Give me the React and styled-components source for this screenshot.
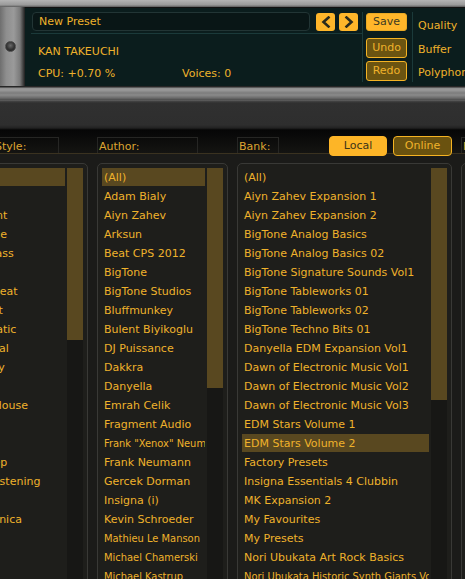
import styled, { createGlobalStyle } from "styled-components";

const GlobalStyle = createGlobalStyle`
  html, body {
    margin: 0;
    padding: 0;
    background: #1b1b19;
  }
  body {
    font-family: "DejaVu Sans", Verdana, sans-serif;
    font-size: 11px;
  }
`;

const GOLD = "#efb22b";

const Page = styled.div`
  width: 465px;
  height: 579px;
  overflow: hidden;
  display: flex;
  flex-direction: column;
  background: #1b1b19;
`;

/* ---------- rack / display ---------- */

const RackTop = styled.div`
  flex-shrink: 0;
  height: 7px;
  background: linear-gradient(#b4b4b4, #9a9a9a 70%, #5a5a5a);
`;

const RackRow = styled.div`
  flex-shrink: 0;
  display: flex;
  height: 79px;
`;

const MetalSide = styled.div`
  flex-shrink: 0;
  width: 25px;
  display: flex;
  align-items: center;
  padding-left: 5px;
  box-sizing: border-box;
  background: linear-gradient(
    to right,
    #6e6e6e,
    #8e8e8e 25%,
    #9a9a9a 55%,
    #7a7a7a 80%,
    #3a3a3a 94%,
    #1e1e1e
  );
`;

const Screw = styled.div`
  width: 11px;
  height: 11px;
  border-radius: 50%;
  box-sizing: border-box;
  border: 1px solid #4a4a4a;
  background: radial-gradient(circle at 50% 40%, #6a6a6a, #333 55%, #1c1c1c);
`;

const Display = styled.div`
  flex: 1;
  min-width: 0;
  display: flex;
  box-sizing: border-box;
  padding: 4px 0 4px 6px;
  background: #0b1d1d;
  border-top: 1px solid #121212;
  color: ${GOLD};
`;

const LeftSection = styled.div`
  flex-shrink: 0;
  width: 332px;
  box-sizing: border-box;
  border-right: 1px solid #1b3a3a;
  display: flex;
  flex-direction: column;
`;

const NameRow = styled.div`
  display: flex;
  align-items: flex-start;
  height: 22px;
  padding-left: 1px;
  border-bottom: 1px solid #1b3a3a;
`;

const NameField = styled.div`
  flex-shrink: 0;
  width: 278px;
  height: 19px;
  box-sizing: border-box;
  border: 1px solid #223535;
  border-radius: 4px;
  background: #091616;
  padding-left: 6px;
  line-height: 17px;
`;

const ArrowButton = styled.div`
  flex-shrink: 0;
  width: 19px;
  height: 18px;
  margin-top: 1px;
  margin-left: ${(p) => p.$gap}px;
  border-radius: 3px;
  background: #ffb62a;
  display: flex;
  align-items: center;
  justify-content: center;
`;

const InfoBlock = styled.div`
  display: flex;
  flex-direction: column;
  gap: 6px;
  padding: 10px 0 0 7px;
  line-height: 16px;
`;

const CpuRow = styled.div`
  display: flex;
`;

const CpuValue = styled.span`
  width: 144px;
`;

const ButtonColumn = styled.div`
  flex-shrink: 0;
  width: 50px;
  box-sizing: border-box;
  padding: 1px 5px 0 3px;
  border-right: 1px solid #1b3a3a;
  display: flex;
  flex-direction: column;
`;

const PanelButton = styled.div`
  height: ${(p) => (p.$solid ? 18 : 20)}px;
  margin-top: ${(p) => p.$top}px;
  box-sizing: border-box;
  border-radius: 3px;
  border: 1px solid ${(p) => (p.$solid ? "#e9a924" : "#f4b324")};
  background: ${(p) => (p.$solid ? "#ffb62a" : "#6b5411")};
  color: ${(p) => (p.$solid ? "#3b3a22" : GOLD)};
  text-align: center;
  line-height: ${(p) => (p.$solid ? 16 : 18)}px;
`;

const SettingsColumn = styled.div`
  display: flex;
  flex-direction: column;
  justify-content: space-between;
  padding: 6px 0 1px 5px;
  line-height: 16px;
  white-space: nowrap;
`;

const RackBottom = styled.div`
  flex-shrink: 0;
  height: 14px;
  background: linear-gradient(
    #262626 0,
    #262626 1px,
    #8e8e8e 2px,
    #9a9a9a 4px,
    #7c7c7c 7px,
    #8a8a8a 9px,
    #6a6a6a 12px,
    #4a4a4a 14px
  );
`;

const DarkBand = styled.div`
  flex-shrink: 0;
  height: 30px;
  background: linear-gradient(
    #6a6a6a 0,
    #454545 1px,
    #303030 3px,
    #2e2e2e 25px,
    #222 28px,
    #050505 30px
  );
`;

/* ---------- browser columns ---------- */

const ColumnGrid = styled.div`
  display: grid;
  grid-template-columns: 134px 131px 215px 1fr;
  column-gap: 9px;
  margin-left: -46px;
`;

const HeaderRow = styled(ColumnGrid)`
  flex-shrink: 0;
  height: 24px;
  box-sizing: border-box;
  padding-top: 7px;
  background: linear-gradient(#060606, #141412);
  border-bottom: 1px solid #3a3220;
  position: relative;
  z-index: 1;
`;

const HeaderCell = styled.div`
  display: flex;
  align-items: flex-start;
`;

const LabelBox = styled.div`
  flex-shrink: 0;
  width: ${(p) => p.$w}px;
  margin-left: ${(p) => p.$offset || 0}px;
  height: 16px;
  box-sizing: border-box;
  border: 1px solid #262624;
  border-bottom: none;
  padding: 2px 0 0 1px;
  line-height: 14px;
  color: #dca431;
  white-space: nowrap;
  overflow: hidden;
`;

const SourceButton = styled.div`
  flex-shrink: 0;
  width: ${(p) => p.$w}px;
  height: 20px;
  margin-top: -1px;
  margin-left: ${(p) => p.$gap}px;
  box-sizing: border-box;
  border-radius: 4px;
  border: 1px solid ${(p) => (p.$active ? "#fdb527" : "#f5b322")};
  background: ${(p) => (p.$active ? "#fdb527" : "#6a520f")};
  color: ${(p) => (p.$active ? "#3c3418" : GOLD)};
  text-align: center;
  line-height: 18px;
`;

const ListsRow = styled(ColumnGrid)`
  flex: 1;
  padding-top: 9px;
  min-height: 0;
`;

const Panel = styled.div`
  height: 440px;
  box-sizing: border-box;
  border: 1px solid #393936;
  border-radius: 5px;
  background: #1e1e1b;
  padding: 4px;
  display: flex;
  gap: 2px;
`;

const List = styled.div`
  flex: 1;
  min-width: 0;
  display: flex;
  flex-direction: column;
`;

const Item = styled.div`
  flex-shrink: 0;
  height: 18px;
  margin-bottom: 1px;
  line-height: 19px;
  padding-left: 2px;
  white-space: nowrap;
  overflow: hidden;
  color: ${GOLD};
  background: ${(p) => (p.$selected ? "#594820" : "transparent")};
  font-family: ${(p) =>
    p.$compact
      ? '"DejaVu Sans Condensed", "DejaVu Sans", sans-serif'
      : '"DejaVu Sans", Verdana, sans-serif'};
  font-stretch: ${(p) => (p.$compact ? "condensed" : "normal")};
`;

const ScrollTrack = styled.div`
  flex-shrink: 0;
  width: 16px;
  background: #171715;
`;

const ScrollThumb = styled.div`
  height: ${(p) => p.$h}px;
  background: #594820;
`;

const Chevron = ({ dir }) => (
  <svg width="10" height="12" viewBox="0 0 10 12">
    <polyline
      points={dir === "left" ? "7.5,1.5 2.5,6 7.5,10.5" : "2.5,1.5 7.5,6 2.5,10.5"}
      fill="none"
      stroke="#2b2a1c"
      strokeWidth="2.6"
      strokeLinecap="square"
    />
  </svg>
);

const styles = [
  "(All)", "Arp", "Ambient", "Baroque", "Acid Bass", "Bells", "Breakbeat",
  "Chillout", "Cinematic", "Classical", "Country", "Dance", "Deep House",
  "Disco", "DnB", "Dubstep", "Easy Listening", "Electro", "Electronica",
  "Funk", "FX", "House",
];

const authors = [
  "(All)", "Adam Bialy", "Aiyn Zahev", "Arksun", "Beat CPS 2012", "BigTone",
  "BigTone Studios", "Bluffmunkey", "Bulent Biyikoglu", "DJ Puissance",
  "Dakkra", "Danyella", "Emrah Celik", "Fragment Audio",
  { name: 'Frank "Xenox" Neumann', compact: true },
  "Frank Neumann", "Gercek Dorman", "Insigna (i)", "Kevin Schroeder",
  { name: "Mathieu Le Manson", compact: true },
  { name: "Michael Chamerski", compact: true },
  { name: "Michael Kastrup", compact: true },
];

const banks = [
  "(All)", "Aiyn Zahev Expansion 1", "Aiyn Zahev Expansion 2",
  "BigTone Analog Basics", "BigTone Analog Basics 02",
  "BigTone Signature Sounds Vol1", "BigTone Tableworks 01",
  "BigTone Tableworks 02", "BigTone Techno Bits 01",
  "Danyella EDM Expansion Vol1", "Dawn of Electronic Music Vol1",
  "Dawn of Electronic Music Vol2", "Dawn of Electronic Music Vol3",
  "EDM Stars Volume 1", "EDM Stars Volume 2", "Factory Presets",
  "Insigna Essentials 4 Clubbin", "MK Expansion 2", "My Favourites",
  "My Presets", "Nori Ubukata Art Rock Basics",
  { name: "Nori Ubukata Historic Synth Giants Vol1", compact: true },
];

const BrowserList = ({ items, selected, thumb }) => (
  <Panel>
    <List>
      {items.map((it) => {
        const name = typeof it === "string" ? it : it.name;
        return (
          <Item key={name} $selected={name === selected} $compact={it.compact}>
            {name}
          </Item>
        );
      })}
    </List>
    <ScrollTrack>
      <ScrollThumb $h={thumb} />
    </ScrollTrack>
  </Panel>
);

const App = () => (
  <Page>
    <GlobalStyle />
    <RackTop />
    <RackRow>
      <MetalSide>
        <Screw />
      </MetalSide>
      <Display>
        <LeftSection>
          <NameRow>
            <NameField>New Preset</NameField>
            <ArrowButton $gap={6}>
              <Chevron dir="left" />
            </ArrowButton>
            <ArrowButton $gap={4}>
              <Chevron dir="right" />
            </ArrowButton>
          </NameRow>
          <InfoBlock>
            <span>KAN TAKEUCHI</span>
            <CpuRow>
              <CpuValue>CPU: +0.70 %</CpuValue>
              <span>Voices: 0</span>
            </CpuRow>
          </InfoBlock>
        </LeftSection>
        <ButtonColumn>
          <PanelButton $solid $top={0}>Save</PanelButton>
          <PanelButton $top={7}>Undo</PanelButton>
          <PanelButton $top={3}>Redo</PanelButton>
        </ButtonColumn>
        <SettingsColumn>
          <span>Quality</span>
          <span>Buffer</span>
          <span>Polyphony</span>
        </SettingsColumn>
      </Display>
    </RackRow>
    <RackBottom />
    <DarkBand />
    <HeaderRow>
      <HeaderCell>
        <LabelBox $w={66} $offset={39}>Style:</LabelBox>
      </HeaderCell>
      <HeaderCell>
        <LabelBox $w={101}>Author:</LabelBox>
      </HeaderCell>
      <HeaderCell>
        <LabelBox $w={42}>Bank:</LabelBox>
        <SourceButton $active $w={58} $gap={50}>Local</SourceButton>
        <SourceButton $w={59} $gap={6}>Online</SourceButton>
      </HeaderCell>
      <HeaderCell>
        <LabelBox $w={80}>Favourites:</LabelBox>
      </HeaderCell>
    </HeaderRow>
    <ListsRow>
      <BrowserList items={styles} selected="(All)" thumb={172} />
      <BrowserList items={authors} selected="(All)" thumb={220} />
      <BrowserList items={banks} selected="EDM Stars Volume 2" thumb={232} />
      <Panel />
    </ListsRow>
  </Page>
);

export default App;
